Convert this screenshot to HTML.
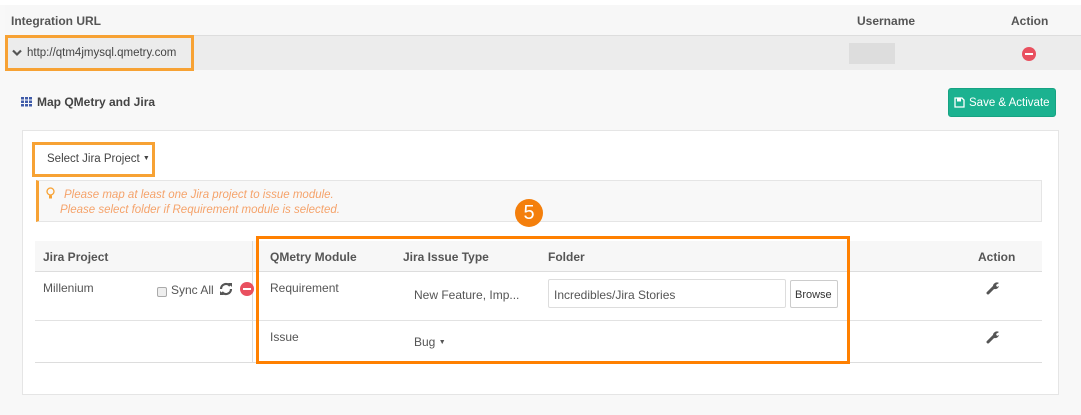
<!DOCTYPE html>
<html><head><meta charset="utf-8"><style>
*{box-sizing:border-box;margin:0;padding:0}
body{width:1081px;height:415px;background:#f8f8f8;font-family:"Liberation Sans",sans-serif;font-size:12px;color:#555;position:relative;overflow:hidden}
.a{position:absolute;white-space:nowrap}
b{font-weight:bold;color:#555}
</style></head><body>
<div class="a" style="left:0;top:0;width:1081px;height:5px;background:#fff"></div>
<div class="a" style="left:5px;top:5px;width:1076px;height:31px;background:#f7f7f7;border-bottom:1px solid #ddd"></div>
<b class="a" style="left:11px;top:14px">Integration URL</b>
<b class="a" style="left:857px;top:14px">Username</b>
<b class="a" style="left:1011px;top:14px">Action</b>
<div class="a" style="left:5px;top:36px;width:1076px;height:34px;background:#ececec"></div>
<div class="a" style="left:5px;top:35px;width:189px;height:36px;border:3px solid #f7a234"></div>
<svg class="a" style="left:12px;top:49px" width="10" height="8"><path d="M1 1.5L5 5.5L9 1.5" stroke="#555" stroke-width="2.2" fill="none"/></svg>
<div class="a" style="left:27px;top:47px;color:#444;font-size:11.5px">http://qtm4jmysql.qmetry.com</div>
<div class="a" style="left:849px;top:43px;width:46px;height:21px;background:#ddd"></div>
<div class="a" style="left:1022px;top:47px;width:14px;height:14px;border-radius:50%;background:#e9505f"></div>
<div class="a" style="left:1025px;top:53px;width:8px;height:2px;background:#fff"></div>
<svg class="a" style="left:21px;top:97px" width="12" height="10"><g fill="#3f5ba9"><rect x="0" y="0" width="3" height="2.5"/><rect x="4" y="0" width="3" height="2.5"/><rect x="8" y="0" width="3" height="2.5"/><rect x="0" y="3.5" width="3" height="2.5"/><rect x="4" y="3.5" width="3" height="2.5"/><rect x="8" y="3.5" width="3" height="2.5"/><rect x="0" y="7" width="3" height="2.5"/><rect x="4" y="7" width="3" height="2.5"/><rect x="8" y="7" width="3" height="2.5"/></g></svg>
<b class="a" style="left:37px;top:95px;color:#444">Map QMetry and Jira</b>
<div class="a" style="left:948px;top:88px;width:108px;height:29px;background:#1bb290;border-radius:3px;border:1px solid #17a383;color:#fff;padding:8px 0 0 20px;font-size:11.5px">Save &amp; Activate</div>
<svg class="a" style="left:954px;top:97px" width="11" height="11"><path d="M1 1H8L10 3V10H1Z" fill="none" stroke="#fff" stroke-width="1.3"/><rect x="3" y="1.5" width="4" height="3" fill="#fff"/></svg>
<div class="a" style="left:22px;top:130px;width:1037px;height:265px;background:#fff;border:1px solid #e5e5e5"></div>
<div class="a" style="left:32px;top:142px;width:123px;height:35px;border:3px solid #f7a234;padding:8px 0 0 12px;color:#444;font-size:11.5px">Select Jira Project <span style="font-size:7px;vertical-align:2px">▼</span></div>
<div class="a" style="left:36px;top:180px;width:1006px;height:42px;background:#f8f8f8;border:1px solid #e5e5e5;border-left:3px solid #f7a234"></div>
<div class="a" style="left:64px;top:188px;color:#f5a36b;font-style:italic;line-height:15px;font-size:11.5px">Please map at least one Jira project to issue module.<br><span style="margin-left:-4px">Please select folder if Requirement module is selected.</span></div>
<svg class="a" style="left:46px;top:187px" width="9" height="13"><circle cx="4.5" cy="4.5" r="3.5" fill="none" stroke="#f7a234" stroke-width="1.3"/><rect x="3" y="8.5" width="3" height="3" fill="#f7a234"/></svg>
<div class="a" style="left:515px;top:199px;width:28px;height:28px;border-radius:50%;background:#f47f0c;color:#fff;font-size:20px;text-align:center;line-height:28px">5</div>
<div class="a" style="left:35px;top:241px;width:1007px;height:31px;background:#f7f7f7;border-bottom:1px solid #ddd"></div>
<div class="a" style="left:35px;top:320px;width:1007px;height:1px;background:#e2e2e2"></div>
<div class="a" style="left:35px;top:362px;width:1007px;height:1px;background:#ddd"></div>
<div class="a" style="left:252px;top:241px;width:1px;height:121px;background:#ddd"></div>
<b class="a" style="left:43px;top:250px">Jira Project</b>
<b class="a" style="left:270px;top:250px">QMetry Module</b>
<b class="a" style="left:403px;top:250px">Jira Issue Type</b>
<b class="a" style="left:548px;top:250px">Folder</b>
<b class="a" style="left:978px;top:250px">Action</b>
<div class="a" style="left:43px;top:281px">Millenium</div>
<div class="a" style="left:157px;top:287px;width:10px;height:10px;border:1px solid #aaa;border-radius:2px;background:#eee"></div>
<div class="a" style="left:171px;top:283px">Sync All</div>
<svg class="a" style="left:219px;top:282px" width="14" height="14"><path d="M2 7A5 5 0 0 1 11 4M12 7A5 5 0 0 1 3 10" fill="none" stroke="#555" stroke-width="2.2"/><path d="M9 1L13 1L13 5Z M1 9L5 13L1 13Z" fill="#555"/></svg>
<div class="a" style="left:240px;top:282px;width:14px;height:14px;border-radius:50%;background:#e9505f"></div>
<div class="a" style="left:243px;top:288px;width:8px;height:2px;background:#fff"></div>
<div class="a" style="left:270px;top:281px">Requirement</div>
<div class="a" style="left:414px;top:288px">New Feature, Imp...</div>
<div class="a" style="left:548px;top:279px;width:238px;height:29px;border:1px solid #ddd;border-radius:2px;padding:8px 0 0 5px">Incredibles/Jira Stories</div>
<div class="a" style="left:790px;top:280px;width:48px;height:28px;border:1px solid #ccc;border-radius:2px;padding:8px 0 0 4px;color:#333;font-size:11px">Browse</div>
<div class="a" style="left:270px;top:330px">Issue</div>
<div class="a" style="left:414px;top:335px">Bug <span style="font-size:7px;vertical-align:2px">▼</span></div>
<svg class="a" style="left:986px;top:281px" width="14" height="14"><path d="M2 12L8 6" stroke="#555" stroke-width="3" stroke-linecap="round"/><path d="M7 6A4 4 0 0 1 13 2L10 4L11 6L13 5A4 4 0 0 1 8 8Z" fill="#555"/></svg>
<svg class="a" style="left:986px;top:330px" width="14" height="14"><path d="M2 12L8 6" stroke="#555" stroke-width="3" stroke-linecap="round"/><path d="M7 6A4 4 0 0 1 13 2L10 4L11 6L13 5A4 4 0 0 1 8 8Z" fill="#555"/></svg>
<div class="a" style="left:256px;top:236px;width:594px;height:128px;border:3px solid #ff8000"></div>
</body></html>
